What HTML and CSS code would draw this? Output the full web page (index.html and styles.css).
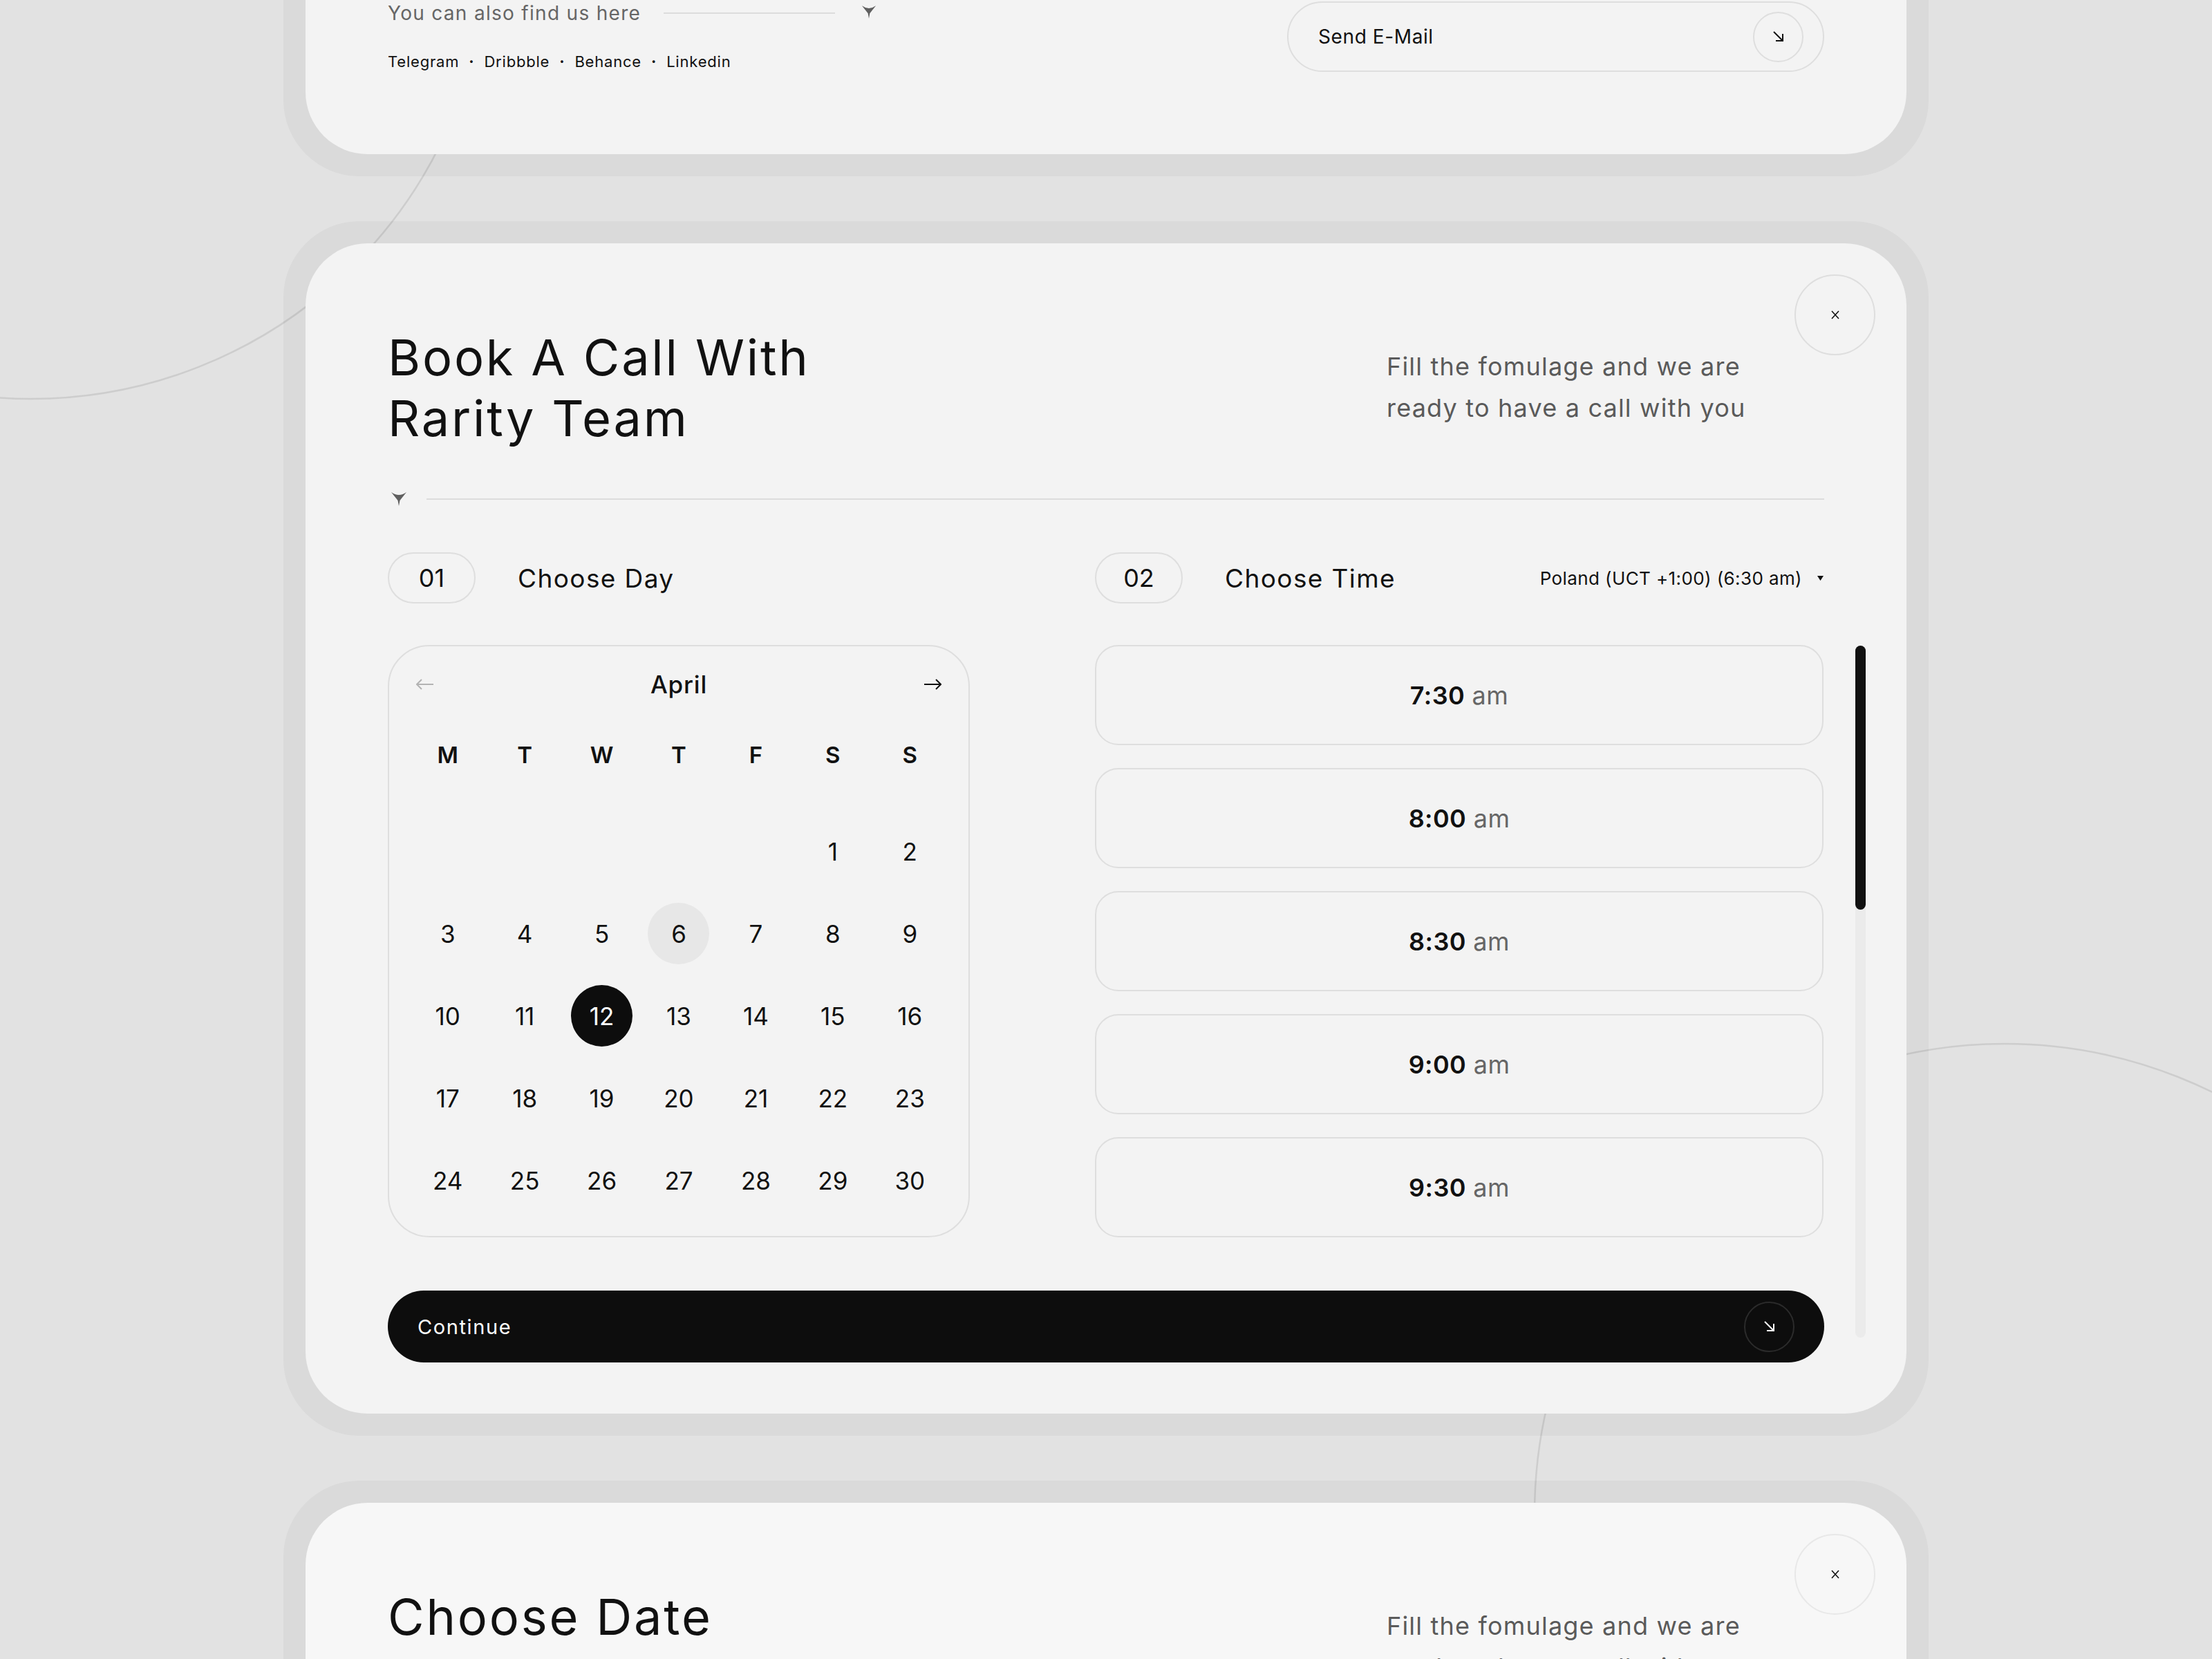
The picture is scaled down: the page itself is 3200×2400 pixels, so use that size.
FILE: index.html
```html
<!DOCTYPE html>
<html>

<head>
    <title>Book A Call With Rarity Team</title>
    <link rel="stylesheet" href="styles.css">
</head>

<body>
    <!-- decorative rings behind the cards -->
    <svg class="bg-lines" width="3200" height="2400" viewBox="0 0 3200 2400">
        <circle cx="45" cy="-83" r="660" />
        <circle cx="2900" cy="2190" r="680" />
    </svg>

    <div class="page">

        <!-- contact card (scrolled above) -->
        <div class="frame frame-first">
            <div class="card contact">
                <div class="contact-left">
                    <div class="find-row">
                        <span class="find-label">You can also find us here</span>
                        <span class="find-line"></span>
                        <svg class="pointer" width="24" height="20" viewBox="0 0 24 20">
                            <path d="M1 0 Q12 8 23 0 L13.5 12 L12 20 L10.5 12 Z" />
                        </svg>
                    </div>
                    <div class="socials">
                        <span>Telegram</span><span class="dot">·</span>
                        <span>Dribbble</span><span class="dot">·</span>
                        <span>Behance</span><span class="dot">·</span>
                        <span>Linkedin</span>
                    </div>
                </div>
                <button class="mail-btn">
                    Send E-Mail
                    <span class="round-arrow">
                        <svg width="22" height="22" viewBox="0 0 22 22">
                            <path d="M4 4 L17 17 M17 7 V17 H7" />
                        </svg>
                    </span>
                </button>
            </div>
        </div>

        <!-- booking modal -->
        <div class="frame">
            <div class="card booking">
                <button class="close-btn">
                    <svg width="12" height="13" viewBox="0 0 12 13">
                        <path d="M1 1 L11 12 M11 1 L1 12" />
                    </svg>
                </button>

                <div class="header">
                    <h1>Book A Call With<br>Rarity Team</h1>
                    <p class="subtitle">Fill the fomulage and we are<br>ready to have a call with you</p>
                </div>

                <div class="divider">
                    <svg class="pointer" width="24" height="20" viewBox="0 0 24 20">
                        <path d="M1 0 Q12 8 23 0 L13.5 12 L12 20 L10.5 12 Z" />
                    </svg>
                    <span class="divider-line"></span>
                </div>

                <div class="steps">
                    <div class="step">
                        <div class="step-head">
                            <span class="step-num">01</span>
                            <span class="step-title">Choose Day</span>
                        </div>

                        <div class="calendar">
                            <div class="cal-head">
                                <svg class="cal-arrow prev" width="26" height="16" viewBox="0 0 26 16">
                                    <path d="M25 8 H1 M8 1 L1 8 L8 15" />
                                </svg>
                                <span class="month">April</span>
                                <svg class="cal-arrow" width="26" height="16" viewBox="0 0 26 16">
                                    <path d="M1 8 H25 M18 1 L25 8 L18 15" />
                                </svg>
                            </div>
                            <div class="weekdays">
                                <span>M</span><span>T</span><span>W</span><span>T</span><span>F</span><span>S</span><span>S</span>
                            </div>
                            <div class="days">
                                <span></span><span></span><span></span><span></span><span></span>
                                <span class="day">1</span><span class="day">2</span>
                                <span class="day">3</span><span class="day">4</span><span class="day">5</span>
                                <span class="day today">6</span><span class="day">7</span><span class="day">8</span><span class="day">9</span>
                                <span class="day">10</span><span class="day">11</span><span class="day selected">12</span>
                                <span class="day">13</span><span class="day">14</span><span class="day">15</span><span class="day">16</span>
                                <span class="day">17</span><span class="day">18</span><span class="day">19</span><span class="day">20</span>
                                <span class="day">21</span><span class="day">22</span><span class="day">23</span>
                                <span class="day">24</span><span class="day">25</span><span class="day">26</span><span class="day">27</span>
                                <span class="day">28</span><span class="day">29</span><span class="day">30</span>
                            </div>
                        </div>
                    </div>

                    <div class="step">
                        <div class="step-head">
                            <span class="step-num">02</span>
                            <span class="step-title">Choose Time</span>
                            <span class="timezone">Poland (UCT +1:00) (6:30 am)
                                <svg width="9" height="7" viewBox="0 0 9 7"><path d="M0 0 H9 L4.5 7 Z" /></svg>
                            </span>
                        </div>

                        <div class="slots">
                            <div class="slot"><b>7:30</b> am</div>
                            <div class="slot"><b>8:00</b> am</div>
                            <div class="slot"><b>8:30</b> am</div>
                            <div class="slot"><b>9:00</b> am</div>
                            <div class="slot"><b>9:30</b> am</div>
                        </div>
                    </div>
                </div>

                <div class="scrollbar"><div class="thumb"></div></div>

                <button class="continue-btn">
                    Continue
                    <span class="round-arrow dark">
                        <svg width="22" height="22" viewBox="0 0 22 22">
                            <path d="M4 4 L17 17 M17 7 V17 H7" />
                        </svg>
                    </span>
                </button>
            </div>
        </div>

        <!-- next modal state -->
        <div class="frame">
            <div class="card booking light">
                <button class="close-btn">
                    <svg width="12" height="13" viewBox="0 0 12 13">
                        <path d="M1 1 L11 12 M11 1 L1 12" />
                    </svg>
                </button>
                <div class="header">
                    <h1>Choose Date</h1>
                    <p class="subtitle">Fill the fomulage and we are<br>ready to have a call with you</p>
                </div>
            </div>
        </div>

    </div>
</body>

</html>
```

FILE: styles.css
```css
html,
body {
    margin: 0;
    overflow: hidden;
}

body {
    font-family: "Inter", "Liberation Sans", sans-serif;
    background-color: #e2e2e2;
    color: #111111;
    position: relative;
    height: 2400px;
}

button {
    font-family: inherit;
    cursor: pointer;
}

.bg-lines {
    position: absolute;
    top: 0;
    left: 0;
    z-index: 0;
}

.bg-lines circle {
    fill: none;
    stroke: #cdcdcd;
    stroke-width: 2.5;
}

.page {
    position: relative;
    z-index: 1;
    width: 2380px;
    margin: 0 auto;
    display: flex;
    flex-direction: column;
    gap: 65px;
}

/* translucent outer ring of every card */
.frame {
    background-color: rgba(0, 0, 0, 0.035);
    border-radius: 110px;
    padding: 32px;
}

.frame-first {
    margin-top: -209px;
}

.card {
    background-color: #f3f3f3;
    border-radius: 90px;
    position: relative;
}

.card.light {
    background-color: #f7f7f7;
    min-height: 1400px;
}

.pointer path {
    fill: #5f5f5f;
}

/* contact card */
.contact {
    height: 400px;
    box-sizing: border-box;
    padding: 0 119px 119px;
    display: flex;
    justify-content: space-between;
    align-items: flex-end;
}

.find-row {
    display: flex;
    align-items: center;
    height: 36px;
}

.find-label {
    font-size: 28px;
    line-height: 36px;
    color: #666666;
    letter-spacing: 1.3px;
}

.find-line {
    width: 248px;
    height: 2px;
    background-color: #dcdcdc;
    margin: 0 38px 0 33px;
}

.find-row .pointer {
    width: 22px;
    height: 19px;
    margin-top: -4px;
}

.socials {
    margin-top: 37px;
    font-size: 22px;
    line-height: 30px;
    letter-spacing: 0.8px;
    display: flex;
    align-items: center;
}

.socials .dot {
    margin: 0 14px;
    font-weight: 700;
}

.mail-btn {
    width: 777px;
    height: 102px;
    box-sizing: border-box;
    border: 2px solid #dedede;
    border-radius: 51px;
    background: none;
    padding: 0 28px 0 43px;
    display: flex;
    align-items: center;
    justify-content: space-between;
    font-size: 28px;
    letter-spacing: 0.6px;
    color: #111111;
}

.round-arrow {
    width: 73px;
    height: 73px;
    box-sizing: border-box;
    border: 2px solid #dedede;
    border-radius: 50%;
    display: flex;
    align-items: center;
    justify-content: center;
}

.round-arrow path {
    fill: none;
    stroke: #111111;
    stroke-width: 2;
}

.round-arrow.dark {
    border-color: #2b2b2b;
}

.round-arrow.dark path {
    stroke: #ffffff;
}

/* booking card */
.booking {
    padding: 121px 119px 74px;
}

.close-btn {
    position: absolute;
    top: 45px;
    right: 45px;
    width: 117px;
    height: 117px;
    border: 2px solid #dedede;
    border-radius: 50%;
    background: none;
    display: flex;
    align-items: center;
    justify-content: center;
}

.light .close-btn {
    border-color: #e8e8e8;
}

.close-btn path {
    stroke: #111111;
    stroke-width: 1.6;
}

.header {
    display: flex;
    justify-content: space-between;
    align-items: baseline;
}

.header h1 {
    margin: 0;
    font-size: 72px;
    line-height: 88px;
    font-weight: 400;
    letter-spacing: 2.8px;
}

.subtitle {
    margin: 0 108px 0 0;
    width: 525px;
    font-size: 36px;
    line-height: 60px;
    color: #5a5a5a;
    letter-spacing: 1.2px;
    white-space: nowrap;
}

.divider {
    margin-top: 63px;
    height: 20px;
    display: flex;
    align-items: center;
}

.divider .pointer {
    margin-left: 4px;
}

.divider-line {
    flex: 1;
    height: 2px;
    margin-left: 28px;
    background-color: #dcdcdc;
}

.steps {
    margin-top: 67px;
    display: grid;
    grid-template-columns: 842px 1054px;
    column-gap: 181px;
}

.step-head {
    height: 74px;
    display: flex;
    align-items: center;
}

.step-num {
    width: 127px;
    height: 74px;
    box-sizing: border-box;
    border: 2px solid #dedede;
    border-radius: 37px;
    display: flex;
    align-items: center;
    justify-content: center;
    font-size: 36px;
}

.step-title {
    margin-left: 61px;
    font-size: 37px;
    letter-spacing: 1.4px;
}

.timezone {
    margin-left: auto;
    font-size: 26px;
    letter-spacing: 0.4px;
    display: flex;
    align-items: center;
    gap: 22px;
}

.timezone path {
    fill: #111111;
}

/* calendar */
.calendar {
    margin-top: 60px;
    height: 857px;
    box-sizing: border-box;
    border: 2px solid #dedede;
    border-radius: 60px;
    padding: 25px 29px 36px;
}

.cal-head {
    height: 60px;
    padding: 0 10px;
    display: flex;
    align-items: center;
    justify-content: space-between;
}

.cal-arrow path {
    fill: none;
    stroke: #111111;
    stroke-width: 2;
}

.cal-arrow.prev path {
    stroke: #b3b3b3;
}

.month {
    font-size: 35px;
    font-weight: 500;
    letter-spacing: 0.8px;
}

.weekdays,
.days {
    display: grid;
    grid-template-columns: repeat(7, 1fr);
}

.weekdays {
    margin-top: 42px;
    height: 60px;
    align-items: center;
    text-align: center;
    font-size: 33px;
    font-weight: 600;
}

.days {
    margin-top: 65px;
    grid-auto-rows: 89px;
    row-gap: 30px;
    justify-items: center;
}

.day {
    width: 89px;
    height: 89px;
    border-radius: 50%;
    display: flex;
    align-items: center;
    justify-content: center;
    font-size: 35px;
}

.day.today {
    background-color: #e7e7e7;
}

.day.selected {
    background-color: #0d0d0d;
    color: #ffffff;
}

/* time slots */
.slots {
    margin-top: 60px;
    display: flex;
    flex-direction: column;
    gap: 33px;
}

.slot {
    height: 145px;
    box-sizing: border-box;
    border: 2px solid #dedede;
    border-radius: 34px;
    display: flex;
    align-items: center;
    justify-content: center;
    font-size: 36px;
    letter-spacing: 0.4px;
    color: #666666;
    white-space: pre;
}

.slot b {
    color: #111111;
    font-weight: 600;
}

.scrollbar {
    position: absolute;
    top: 582px;
    right: 59px;
    width: 15px;
    height: 1001px;
    border-radius: 8px;
    background-color: #ebebeb;
}

.thumb {
    height: 382px;
    border-radius: 8px;
    background-color: #111111;
}

.continue-btn {
    margin-top: 77px;
    width: 100%;
    height: 104px;
    border: none;
    border-radius: 52px;
    background-color: #0d0d0d;
    color: #ffffff;
    padding: 0 43px;
    display: flex;
    align-items: center;
    justify-content: space-between;
    font-size: 29px;
    letter-spacing: 1.6px;
}
```
